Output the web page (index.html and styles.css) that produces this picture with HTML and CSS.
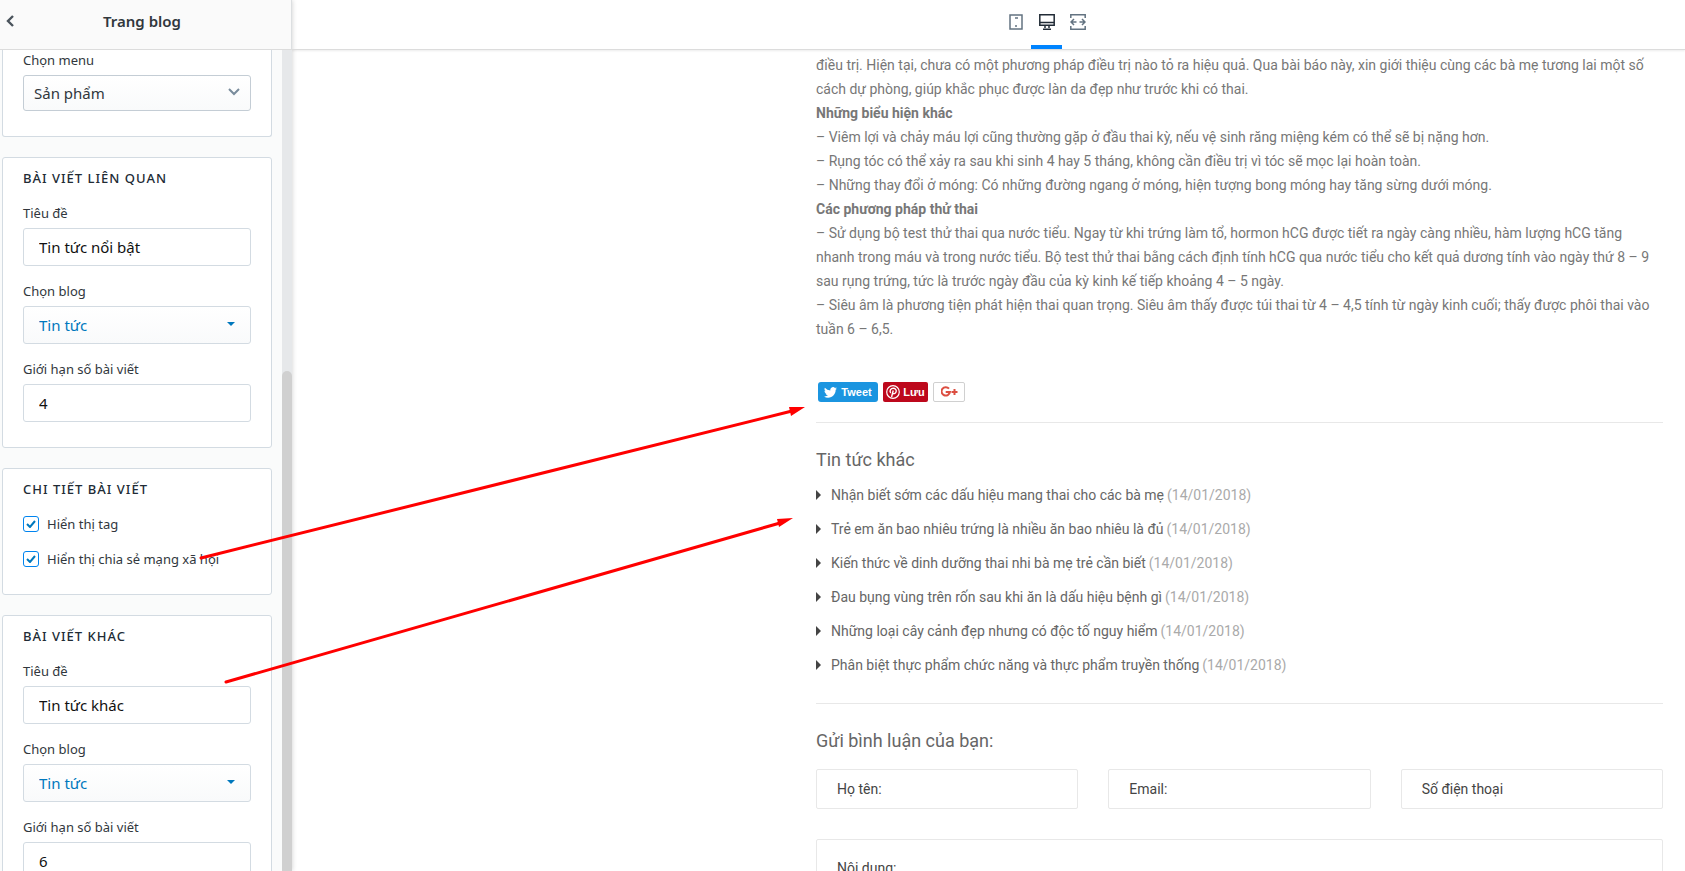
FILE: index.html
```
<!DOCTYPE html>
<html lang="vi">
<head>
    <meta charset="UTF-8">
    <meta name="viewport" content="width=device-width, initial-scale=1.0">
    <title>Trang blog</title>
    <link rel="stylesheet" href="styles.css">
</head>
<body>
    <div class="editor">
        <aside class="sidebar">
            <header class="sidebar-header">
                <button class="back" type="button" aria-label="Quay lại">
                    <svg width="10" height="14" viewBox="0 0 10 14"><path d="M8 2L3 7l5 5" fill="none" stroke="#4a535c" stroke-width="2.4"/></svg>
                </button>
                <h1 class="sidebar-title">Trang blog</h1>
            </header>
            <div class="sidebar-body">
                <div class="panels">
                    <section class="card card-cut">
                        <div class="field">
                            <label for="menu">Chọn menu</label>
                            <select class="select" id="menu">
                                <option>Sản phẩm</option>
                            </select>
                        </div>
                    </section>

                    <section class="card">
                        <h2>Bài viết liên quan</h2>
                        <div class="field">
                            <label for="related-title">Tiêu đề</label>
                            <input class="input" id="related-title" type="text" value="Tin tức nổi bật">
                        </div>
                        <div class="field">
                            <label for="related-blog">Chọn blog</label>
                            <select class="select select-blog" id="related-blog">
                                <option>Tin tức</option>
                            </select>
                        </div>
                        <div class="field">
                            <label for="related-limit">Giới hạn số bài viết</label>
                            <input class="input" id="related-limit" type="text" value="4">
                        </div>
                    </section>

                    <section class="card">
                        <h2>Chi tiết bài viết</h2>
                        <label class="check"><input type="checkbox" checked> Hiển thị tag</label>
                        <label class="check"><input type="checkbox" checked> Hiển thị chia sẻ mạng xã hội</label>
                    </section>

                    <section class="card">
                        <h2>Bài viết khác</h2>
                        <div class="field">
                            <label for="other-title">Tiêu đề</label>
                            <input class="input" id="other-title" type="text" value="Tin tức khác">
                        </div>
                        <div class="field">
                            <label for="other-blog">Chọn blog</label>
                            <select class="select select-blog" id="other-blog">
                                <option>Tin tức</option>
                            </select>
                        </div>
                        <div class="field">
                            <label for="other-limit">Giới hạn số bài viết</label>
                            <input class="input" id="other-limit" type="text" value="6">
                        </div>
                    </section>
                </div>
                <div class="scrollbar"><div class="thumb"></div></div>
            </div>
        </aside>

        <main class="preview">
            <div class="devices">
                <button class="device" type="button" aria-label="Di động">
                    <svg width="16" height="16" viewBox="0 0 16 16" fill="none" stroke="#637381" stroke-width="1.5"><rect x="2" y="1" width="12" height="14"/><path d="M7 4h3M7 12h2" stroke-width="1.6"/></svg>
                </button>
                <button class="device active" type="button" aria-label="Máy tính">
                    <svg width="16" height="16" viewBox="0 0 16 16" fill="none" stroke="#212b36" stroke-width="1.5"><path d="M.8.8h14.4v10.4H.8zM1 8.5h14M6 11.5V14M10 11.5V14M4 15.2h8"/></svg>
                </button>
                <button class="device" type="button" aria-label="Toàn màn hình">
                    <svg width="16" height="16" viewBox="0 0 16 16" fill="none" stroke="#637381" stroke-width="1.5"><path d="M.8 4V.8h14.4V4M.8 12v3.2h14.4V12M1 8h5.5M9.500 8H15M4 5L1 8l3 3M12 5l3 3-3 3"/></svg>
                </button>
            </div>

            <div class="page">
                <article class="article">
                    <p>điều trị. Hiện tại, chưa có một phương pháp điều trị nào tỏ ra hiệu quả. Qua bài báo này, xin giới thiệu cùng các bà mẹ tương lai một số cách dự phòng, giúp khắc phục được làn da đẹp như trước khi có thai.</p>
                    <p><strong>Những biểu hiện khác</strong></p>
                    <p>– Viêm lợi và chảy máu lợi cũng thường gặp ở đầu thai kỳ, nếu vệ sinh răng miệng kém có thể sẽ bị nặng hơn.</p>
                    <p>– Rụng tóc có thể xảy ra sau khi sinh 4 hay 5 tháng, không cần điều trị vì tóc sẽ mọc lại hoàn toàn.</p>
                    <p>– Những thay đổi ở móng: Có những đường ngang ở móng, hiện tượng bong móng hay tăng sừng dưới móng.</p>
                    <p><strong>Các phương pháp thử thai</strong></p>
                    <p>– Sử dụng bộ test thử thai qua nước tiểu. Ngay từ khi trứng làm tổ, hormon hCG được tiết ra ngày càng nhiều, hàm lượng hCG tăng nhanh trong máu và trong nước tiểu. Bộ test thử thai bằng cách định tính hCG qua nước tiểu cho kết quả dương tính vào ngày thứ 8 – 9 sau rụng trứng, tức là trước ngày đầu của kỳ kinh kế tiếp khoảng 4 – 5 ngày.</p>
                    <p>– Siêu âm là phương tiện phát hiện thai quan trọng. Siêu âm thấy được túi thai từ 4 – 4,5 tính từ ngày kinh cuối; thấy được phôi thai vào tuần 6 – 6,5.</p>
                </article>

                <div class="share">
                    <a class="share-btn tweet" href="#">
                        <svg width="13" height="11" viewBox="0 0 24 20"><path fill="#fff" d="M24 2.400a10 10 0 0 1-2.800.8A5 5 0 0 0 23.300.4a10 10 0 0 1-3.100 1.200 4.900 4.900 0 0 0-8.400 4.500A14 14 0 0 1 1.700 1a4.900 4.900 0 0 0 1.500 6.500 5 5 0 0 1-2.200-.6v.1c0 2.300 1.700 4.300 3.900 4.800a5 5 0 0 1-2.200.1 4.900 4.900 0 0 0 4.600 3.400A9.900 9.900 0 0 1 0 17.300a14 14 0 0 0 7.500 2.200c9.100 0 14.300-7.700 14-14.600A10 10 0 0 0 24 2.400z"/></svg>
                        Tweet
                    </a>
                    <a class="share-btn pin" href="#">
                        <svg width="14" height="14" viewBox="0 0 14 14" fill="none" stroke="#fff"><circle cx="7" cy="7" r="6.300" stroke-width="1.200"/><path d="M4.700 8C3 5.500 5 3.300 7.200 3.300s3.500 1.600 2.900 3.600c-.6 2.100-3 2.300-3.400 1M7.200 5.500L5.600 12" stroke-width="1.400"/></svg>
                        Lưu
                    </a>
                    <a class="share-btn gplus" href="#" aria-label="Google+">
                        <svg width="17" height="12" viewBox="0 0 17 12" fill="none" stroke="#dc4e41" stroke-width="2"><path d="M8 2.700A4.200 4.200 0 1 0 8.900 6H4.700M10.500 6h6M13.500 3v6"/></svg>
                    </a>
                </div>

                <section class="block">
                    <h3>Tin tức khác</h3>
                    <ul class="news">
                        <li><a href="#">Nhận biết sớm các dấu hiệu mang thai cho các bà mẹ</a> <span>(14/01/2018)</span></li>
                        <li><a href="#">Trẻ em ăn bao nhiêu trứng là nhiều ăn bao nhiêu là đủ</a> <span>(14/01/2018)</span></li>
                        <li><a href="#">Kiến thức về dinh dưỡng thai nhi bà mẹ trẻ cần biết</a> <span>(14/01/2018)</span></li>
                        <li><a href="#">Đau bụng vùng trên rốn sau khi ăn là dấu hiệu bệnh gì</a> <span>(14/01/2018)</span></li>
                        <li><a href="#">Những loại cây cảnh đẹp nhưng có độc tố nguy hiểm</a> <span>(14/01/2018)</span></li>
                        <li><a href="#">Phân biệt thực phẩm chức năng và thực phẩm truyền thống</a> <span>(14/01/2018)</span></li>
                    </ul>
                </section>

                <section class="block">
                    <h3>Gửi bình luận của bạn:</h3>
                    <form class="comment">
                        <input type="text" placeholder="Họ tên:" aria-label="Họ tên">
                        <input type="email" placeholder="Email:" aria-label="Email">
                        <input type="tel" placeholder="Số điện thoại" aria-label="Số điện thoại">
                        <textarea placeholder="Nội dung:" aria-label="Nội dung" rows="5"></textarea>
                    </form>
                </section>
            </div>
        </main>
    </div>

    <!-- mũi tên chú thích -->
    <svg class="arrows" width="820" height="700" viewBox="0 0 820 700">
        <g stroke="#f00" stroke-width="3" stroke-linecap="round">
            <path d="M201 558L792 411"/>
            <path d="M226 682L780 523"/>
        </g>
        <path fill="#f00" d="M805 407l-14 9-2-9zM793 518l-14 9-2-8z"/>
    </svg>
</body>
</html>
```
FILE: styles.css
```
* {
    box-sizing: border-box;
}
body {
    margin: 0;
    height: 100vh;
    overflow: hidden;
    background-color: #fff;
    font-family: Roboto, "Liberation Sans", sans-serif;
    font-size: 14px;
}
h1, h2, h3, p, ul {
    margin: 0;
    padding: 0;
    font-weight: normal;
}
a {
    color: inherit;
    text-decoration: none;
}
button {
    border: 0;
    background: none;
    padding: 0;
    cursor: pointer;
}
.editor {
    display: flex;
    height: 100vh;
}

/* sidebar */
.sidebar {
    width: 292px;
    flex-shrink: 0;
    display: flex;
    flex-direction: column;
    background-color: #fafbfb;
    box-shadow: 0 0 5px rgba(0, 0, 0, 0.2);
    font-family: "Noto Sans", sans-serif;
    color: #31373d;
}
.sidebar-header {
    height: 50px;
    flex-shrink: 0;
    display: flex;
    align-items: center;
    padding-bottom: 8px;
    padding-left: 5px;
    background-color: #fafafa;
    border-right: 1px solid #dcdfe1;
    border-bottom: 1px solid #dcdcdc;
}
.back {
    width: 12px;
    height: 14px;
}
.back svg {
    display: block;
}
.sidebar-title {
    flex: 1;
    padding-right: 24px;
    text-align: center;
    font-size: 15px;
    font-weight: 600;
    color: #31373d;
}
.sidebar-body {
    flex: 1;
    min-height: 0;
    display: flex;
    justify-content: space-between;
}
.panels {
    width: 270px;
    margin-left: 2px;
    overflow: hidden;
}
.card {
    margin-bottom: 20px;
    padding: 10px 20px;
    background-color: #fff;
    border: 1px solid #d3dbe2;
    border-radius: 3px;
}
.card-cut {
    padding-top: 0;
    border-top: 0;
    border-radius: 0 0 3px 3px;
}
.card h2 {
    margin-bottom: 15px;
    font-size: 13px;
    line-height: 20px;
    font-weight: 500;
    text-transform: uppercase;
    letter-spacing: 1px;
    color: #212b35;
}
.field {
    margin-bottom: 15px;
}
.field label {
    display: block;
    margin-bottom: 5px;
    font-size: 13px;
    line-height: 20px;
}
.input, .select {
    display: block;
    width: 100%;
    height: 38px;
    padding: 0 15px;
    border: 1px solid #d3dbe2;
    border-radius: 3px;
    background-color: #fff;
    font-family: inherit;
    font-size: 15px;
    color: #111;
}
.select {
    appearance: none;
    height: 36px;
    padding: 0 10px;
    border-color: #c4cdd5;
    color: #31373d;
    background: url("data:image/svg+xml,%3Csvg xmlns='http://www.w3.org/2000/svg' width='12' height='8'%3E%3Cpath d='M1 1l5 5 5-5' fill='none' stroke='%23798c9c' stroke-width='2'/%3E%3C/svg%3E") no-repeat right 10px top 12px, linear-gradient(#fff, #f9fafb);
}
.select-blog {
    height: 38px;
    padding: 0 15px;
    border-color: #d3dbe2;
    color: #0078bd;
    background: url("data:image/svg+xml,%3Csvg xmlns='http://www.w3.org/2000/svg' width='8' height='4'%3E%3Cpath d='M0 0h8L4 4z' fill='%230078bd'/%3E%3C/svg%3E") no-repeat right 15px top 15px, linear-gradient(#fff, #f9fafb);
}
.check {
    display: flex;
    align-items: center;
    gap: 8px;
    margin-bottom: 15px;
    font-size: 13px;
    line-height: 20px;
    white-space: nowrap;
}
.check input {
    appearance: none;
    width: 16px;
    height: 16px;
    margin: 0;
    border: 1px solid #0084ef;
    border-radius: 3px;
    background: url("data:image/svg+xml,%3Csvg xmlns='http://www.w3.org/2000/svg' width='10' height='8'%3E%3Cpath d='M1 4l3 3 5-6' fill='none' stroke='%230078bd' stroke-width='2'/%3E%3C/svg%3E") no-repeat center #fff;
}
.scrollbar {
    width: 10px;
    padding-top: 321px;
    background-color: #e6e8ea;
}
.thumb {
    height: 100%;
    background-color: #d0d0d0;
    border-radius: 5px 5px 0 0;
}

/* preview */
.preview {
    flex: 1;
    min-width: 0;
    overflow: hidden;
}
.devices {
    height: 50px;
    display: flex;
    justify-content: center;
    padding-left: 116px;
    border-bottom: 1px solid #dcdcdc;
    box-shadow: 0 1px 2px rgba(0, 0, 0, 0.08);
}
.device {
    width: 31px;
    padding-top: 6px;
    padding-bottom: 8px;
    border-bottom: 4px solid transparent;
}
.device.active {
    border-bottom-color: #0084ff;
}
.device svg {
    display: block;
    margin: 0 auto;
}
.page {
    margin-left: 524px;
    margin-right: 22px;
    padding-top: 3px;
}
.article {
    padding-right: 10px;
    line-height: 24px;
    color: #777;
}
.share {
    display: flex;
    gap: 5px;
    padding: 41px 2px 20px;
}
.share-btn {
    display: flex;
    align-items: center;
    justify-content: center;
    gap: 4px;
    height: 20px;
    border-radius: 3px;
    font-family: "Liberation Sans", sans-serif;
    font-size: 11px;
    font-weight: bold;
    color: #fff;
}
.tweet {
    width: 60px;
    background-color: #1b95e0;
}
.pin {
    width: 45px;
    background-color: #bd081c;
    border-radius: 2px;
    gap: 3px;
}
.gplus {
    width: 32px;
    background-color: #fff;
    border: 1px solid #d0d0d0;
    border-radius: 2px;
}
.block {
    border-top: 1px solid #e8e8e8;
    padding-top: 25px;
}
.block h3 {
    margin-bottom: 6px;
    font-size: 18px;
    line-height: 24px;
    color: #666;
}
.news {
    margin-bottom: 21px;
    list-style: none;
}
.news li {
    display: flex;
    align-items: center;
    gap: 3px;
    line-height: 34px;
    color: #666;
}
.news li::before {
    content: "";
    margin-right: 7px;
    border: 5px solid transparent;
    border-left-color: #444;
    border-right: 0;
}
.news span {
    color: #aaa;
}
.comment {
    display: grid;
    grid-template-columns: repeat(3, 1fr);
    gap: 30px;
    padding-top: 10px;
}
.comment input, .comment textarea {
    min-width: 0;
    height: 40px;
    padding: 0 20px;
    border: 1px solid #e8e8e8;
    border-radius: 2px;
    font-family: inherit;
    font-size: 14px;
}
.comment textarea {
    grid-column: span 3;
    height: 120px;
    padding: 20px;
    resize: none;
}
.comment ::placeholder {
    color: #444;
}

.arrows {
    position: absolute;
    top: 0;
    left: 0;
    pointer-events: none;
}
```
